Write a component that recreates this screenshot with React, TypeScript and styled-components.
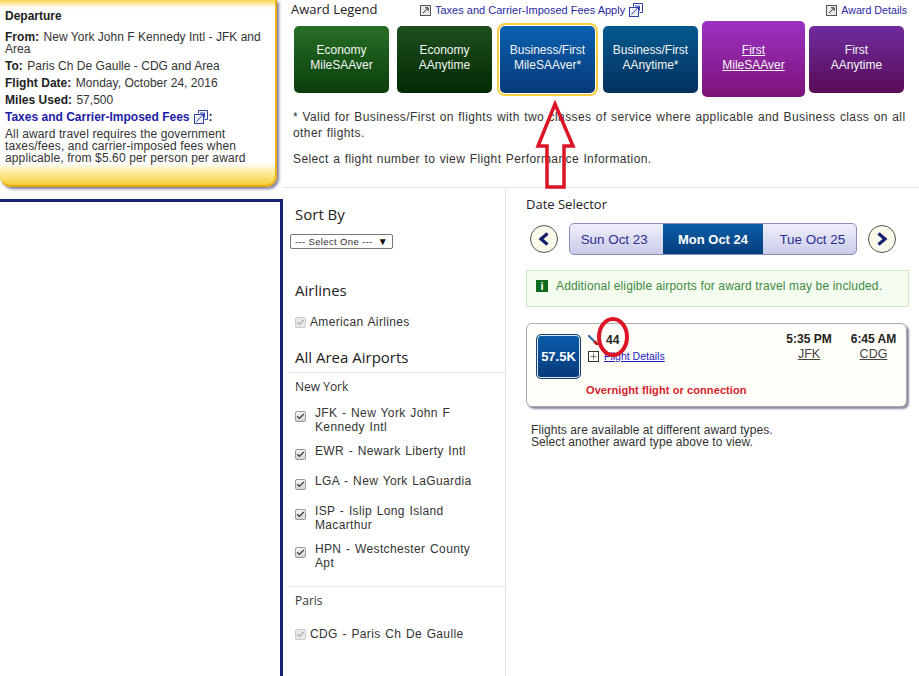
import React from 'react';
import styled, { createGlobalStyle } from 'styled-components';
import { Check, Plus } from 'lucide-react';

const GlobalStyle = createGlobalStyle`
    html, body {
        margin: 0;
        padding: 0;
        background: #fff;
    }
    body {
        font-family: "Liberation Sans", Arial, sans-serif;
        font-size: 12px;
        color: #222;
    }
`;

const Page = styled.div`
    position: relative;
    display: grid;
    grid-template-columns: 283px 1fr;
    width: 919px;
    height: 676px;
    overflow: hidden;
`;

const LeftColumn = styled.aside`
    display: flex;
    flex-direction: column;
    height: 676px;
`;

const SummaryCard = styled.section`
    box-sizing: border-box;
    width: 277px;
    height: 187px;
    padding: 9px 5px 0;
    border-right: 2px solid #eeb01a;
    border-bottom: 2px solid #e5a90f;
    border-radius: 0 0 11px 11px;
    background: linear-gradient(
        #fbd24a 0,
        #fffdf2 7px,
        #fff 12px,
        #fff 163px,
        #fdeda0 172px,
        #f8c92c 187px
    );
    box-shadow: 2px 2px 3px #77779a;
`;

const CardTitle = styled.div`
    font-weight: bold;
    line-height: 14px;
    margin-bottom: 8px;
`;

const SummaryRow = styled.div`
    line-height: 12px;
    margin-bottom: 5px;
    color: #333;
    letter-spacing: 0.03px;

    b {
        color: #222;
        margin-right: 1px;
    }
`;

const FeesLink = styled.div`
    display: flex;
    align-items: center;
    gap: 4px;
    height: 12px;
    font-weight: bold;
    line-height: 12px;
    color: #1c1ca8;
    margin-bottom: 5px;

    span {
        color: #222;
        margin-left: -3px;
    }
`;

const SummaryNote = styled.p`
    margin: 0;
    line-height: 12px;
    color: #333;
    letter-spacing: 0.12px;
`;

const NavBox = styled.div`
    flex: 1;
    margin-top: 12px;
    border-top: 3px solid #1a2274;
    border-right: 3px solid #1a2274;
`;

const Main = styled.main`
    display: flex;
    flex-direction: column;
`;

const LegendPanel = styled.section`
    box-sizing: border-box;
    height: 188px;
    padding: 0 8px;
    border-bottom: 1px solid #e8e8e8;
`;

const LegendHeader = styled.div`
    display: flex;
    align-items: center;
    height: 20px;
`;

const PanelTitle = styled.h2`
    margin: 0;
    font-family: "Open Sans", sans-serif;
    font-weight: 400;
    font-size: 13px;
    color: #222;
`;

const LegendTitle = styled(PanelTitle)`
    width: 129px;
    margin-top: -2px;
`;

const HeaderLink = styled.a<{ $push?: boolean }>`
    display: flex;
    align-items: center;
    gap: 4px;
    font-size: ${(p) => (p.$push ? '10.7px' : '11px')};
    color: #2a2aa0;
    margin-left: ${(p) => (p.$push ? 'auto' : '0')};
    margin-right: ${(p) => (p.$push ? '6px' : '0')};
`;

const AwardRow = styled.div`
    display: flex;
    align-items: center;
    height: 76px;
    margin-top: 1px;
    padding-left: 3px;
    gap: 8px;
`;

const AwardButton = styled.div<{ $from: string; $to: string; $wide?: boolean; $ring?: boolean }>`
    box-sizing: border-box;
    display: flex;
    align-items: center;
    justify-content: center;
    flex: none;
    width: ${(p) => (p.$wide ? '103px' : '95px')};
    height: ${(p) => (p.$wide ? '76px' : '67px')};
    margin: ${(p) => (p.$wide ? '0 -4px' : '0')};
    padding-bottom: 2px;
    border-radius: 5px;
    background: linear-gradient(${(p) => p.$from}, ${(p) => p.$to});
    color: #f2f6f4;
    font-size: 12px;
    line-height: 15px;
    text-align: center;
    box-shadow: ${(p) => (p.$ring ? '0 0 0 1px #fff, 0 0 0 3px #f7cf3e' : 'none')};
    text-decoration: ${(p) => (p.$wide ? 'underline' : 'none')};
`;

const LegendNote = styled.p<{ $top: number }>`
    margin: ${(p) => p.$top}px 0 0 2px;
    width: 620px;
    font-size: 12px;
    line-height: 16px;
    letter-spacing: 0.4px;
    word-spacing: 0.7px;
    color: #333;
`;

const Columns = styled.div`
    flex: 1;
    display: grid;
    grid-template-columns: 223px 1fr;
`;

const Filters = styled.section`
    box-sizing: border-box;
    border-right: 1px solid #e4e4e4;
    padding: 16px 0 0 6px;
`;

const FilterTitle = styled(PanelTitle)<{ $top?: number }>`
    font-size: 15px;
    line-height: 20px;
    padding-left: 6px;
    margin-top: ${(p) => p.$top ?? 0}px;
`;

const SortSelect = styled.div`
    box-sizing: border-box;
    display: flex;
    align-items: center;
    justify-content: space-between;
    width: 103px;
    height: 15px;
    margin: 10px 0 31px 1px;
    padding: 0 4px;
    border: 1px solid #777;
    border-radius: 2px;
    font-size: 9.5px;
    color: #333;
    letter-spacing: 0.35px;

    span {
        font-size: 10px;
        color: #111;
    }
`;

const AirportList = styled.div`
    display: flex;
    flex-direction: column;
`;

const CheckRow = styled.label<{ $muted?: boolean; $offset?: number }>`
    display: flex;
    align-items: ${(p) => (p.$muted ? 'center' : 'flex-start')};
    gap: ${(p) => (p.$muted ? '4px' : '9px')};
    padding-left: 6px;
    width: 184px;
    line-height: 14px;
    margin-top: ${(p) => p.$offset ?? 0}px;
    color: #333;
    font-size: 12px;
    letter-spacing: 0.35px;
    word-spacing: 1px;
    white-space: ${(p) => (p.$muted ? 'nowrap' : 'normal')};
`;

const CheckBox = styled.span<{ $muted?: boolean }>`
    box-sizing: border-box;
    flex: none;
    display: flex;
    align-items: center;
    justify-content: center;
    width: 11px;
    height: 11px;
    margin-top: ${(p) => (p.$muted ? '0' : '5px')};
    border: 1px solid ${(p) => (p.$muted ? '#ccc' : '#999')};
    border-radius: 2px;
    background: ${(p) => (p.$muted ? '#e8e8e8' : 'linear-gradient(#f4f4f4, #d4d4d4)')};
    color: ${(p) => (p.$muted ? '#aaa' : '#333')};
`;

const Divider = styled.div<{ $top: number }>`
    height: 1px;
    margin-top: ${(p) => p.$top}px;
    background: #e6e6e6;
`;

const RegionName = styled.div<{ $top: number }>`
    font-family: "Open Sans", sans-serif;
    font-size: 12px;
    line-height: 16px;
    padding-left: 6px;
    margin-top: ${(p) => p.$top}px;
    color: #333;
`;

const Results = styled.section`
    padding: 7px 0 0 20px;
`;

const DateRow = styled.div`
    display: flex;
    align-items: center;
    height: 32px;
    margin-top: 10px;
    gap: 11px;
    padding-left: 4px;
`;

const RoundButton = styled.div`
    box-sizing: border-box;
    display: flex;
    align-items: center;
    justify-content: center;
    width: 28px;
    height: 28px;
    border: 1px solid #555;
    border-radius: 50%;
    background: #fbf9ea;
    color: #14206e;
`;

const DateTabs = styled.div`
    display: flex;
    width: 288px;
    height: 32px;
    box-sizing: border-box;
    border: 1px solid #8a8fc0;
    border-radius: 5px;
    overflow: hidden;
    background: linear-gradient(#f0f0fa, #c9cbea);
`;

const DateTab = styled.div<{ $active?: boolean; $w: number; $nudge?: number }>`
    box-sizing: border-box;
    display: flex;
    align-items: center;
    justify-content: center;
    width: ${(p) => p.$w}px;
    padding-left: ${(p) => Math.max(p.$nudge ?? 0, 0)}px;
    padding-right: ${(p) => Math.max(-(p.$nudge ?? 0), 0)}px;
    font-size: ${(p) => (p.$active ? '13px' : '13.4px')};
    color: ${(p) => (p.$active ? '#fff' : '#2b2f8f')};
    font-weight: ${(p) => (p.$active ? 'bold' : 'normal')};
    background: ${(p) => (p.$active ? 'linear-gradient(#0a5fa8, #063d7c)' : 'transparent')};
`;

const InfoBox = styled.div`
    box-sizing: border-box;
    display: flex;
    align-items: flex-start;
    gap: 8px;
    width: 383px;
    height: 37px;
    margin-top: 15px;
    padding: 8px 9px;
    background: #f3fcef;
    border: 1px solid #d2e6c8;
    color: #3f8a42;
    font-size: 12px;
    line-height: 14px;
    letter-spacing: 0.15px;
`;

const InfoIcon = styled.span`
    flex: none;
    display: flex;
    align-items: center;
    justify-content: center;
    width: 12px;
    height: 12px;
    margin-top: 1px;
    background: #0f6b1c;
    color: #fff;
    font: bold 11px "Liberation Sans", sans-serif;
`;

const FlightCard = styled.article`
    box-sizing: border-box;
    display: flex;
    width: 381px;
    height: 84px;
    margin-top: 16px;
    padding: 10px 0 0 9px;
    border: 1px solid #aaa;
    border-radius: 6px;
    background: #fffef8;
    box-shadow: 2px 2px 2px #8a8aa0;
`;

const PriceBadge = styled.div`
    box-sizing: border-box;
    flex: none;
    display: flex;
    align-items: center;
    justify-content: center;
    width: 45px;
    height: 45px;
    border: 1px solid #17406f;
    box-shadow: inset 0 0 0 1px #dfe8f2;
    border-radius: 5px;
    background: linear-gradient(#0a5cab, #063a78);
    color: #fff;
    font-weight: bold;
    font-size: 13px;
`;

const FlightInfo = styled.div`
    flex: 1;
    padding-left: 7px;
`;

const FlightNumber = styled.div`
    display: flex;
    align-items: center;
    gap: 8px;
    height: 14px;
    margin-top: -1px;
    font-weight: bold;
    font-size: 12px;
    color: #222;
`;

const DetailRow = styled.div`
    display: flex;
    align-items: center;
    gap: 5px;
    margin-top: 2px;
    height: 14px;
    color: #1c1cc0;
    font-size: 10.5px;
    text-decoration: underline;
`;

const PlusBox = styled.span`
    box-sizing: border-box;
    display: flex;
    align-items: center;
    justify-content: center;
    width: 11px;
    height: 11px;
    border: 1px solid #333;
    color: #222;
`;

const Overnight = styled.div`
    margin: 21px 0 0 -2px;
    font-weight: bold;
    font-size: 11px;
    letter-spacing: 0.1px;
    color: #d3222c;
`;

const TimeColumn = styled.div<{ $w: number }>`
    width: ${(p) => p.$w}px;
    text-align: center;
    margin-top: -2px;
    font-size: 12px;
    line-height: 15px;
    color: #222;

    b {
        display: block;
    }
    u {
        color: #444;
        font-size: 12.5px;
    }
`;

const ResultNote = styled.p`
    margin: 17px 0 0 5px;
    line-height: 12px;
    font-size: 12px;
    letter-spacing: 0.08px;
    color: #333;
`;

const Annotation = styled.svg`
    position: absolute;
    left: 0;
    top: 0;
    pointer-events: none;
`;

function FramedIcon() {
    return (
        <svg width="11" height="12" viewBox="0 0 11 12" fill="none">
            <rect x="0.5" y="1.5" width="10" height="10" fill="#e6e9ee" stroke="#555" />
            <path d="M3 9 L8 4 M5 3.8 H8.2 V7" stroke="#333" />
        </svg>
    );
}

function OverlapIcon() {
    return (
        <svg width="14" height="14" viewBox="0 0 14 14" fill="none" stroke="#2f3fa8">
            <path d="M4.5 3.5 V0.5 H13.5 V9.5 H10.5" />
            <rect x="0.5" y="4.5" width="9" height="9" fill="#eef1fb" />
            <path d="M2.5 11.5 L10 3.5 M6 3 H10.5 V7.5" />
        </svg>
    );
}

function Arrow({ flip }: { flip?: boolean }) {
    return (
        <svg width="12" height="14" viewBox="0 0 12 14" fill="none" stroke="currentColor" strokeWidth="3.2">
            <path d={flip ? 'M2.5 1.5 L9 7 L2.5 12.5' : 'M9.5 1.5 L3 7 L9.5 12.5'} />
        </svg>
    );
}

const airports = [
    { label: 'JFK - New York John F Kennedy Intl', top: 11 },
    { label: 'EWR - Newark Liberty Intl', top: 10 },
    { label: 'LGA - New York LaGuardia', top: 14 },
    { label: 'ISP - Islip Long Island Macarthur', top: 14 },
    { label: 'HPN - Westchester County Apt', top: 10 },
];

const awards = [
    { text: ['Economy', 'MileSAAver'], from: '#276f27', to: '#0b3d0b' },
    { text: ['Economy', 'AAnytime'], from: '#1e4f1e', to: '#022a02' },
    { text: ['Business/First', 'MileSAAver*'], from: '#0a60b0', to: '#063a78', ring: true },
    { text: ['Business/First', 'AAnytime*'], from: '#05598f', to: '#03305e' },
    { text: ['First', 'MileSAAver'], from: '#9c32c4', to: '#7c1277', wide: true },
    { text: ['First', 'AAnytime'], from: '#6f2c9e', to: '#5a0c58' },
];

export default function App() {
    return (
        <Page>
            <GlobalStyle />
            <LeftColumn>
                <SummaryCard>
                    <CardTitle>Departure</CardTitle>
                    <SummaryRow><b>From:</b> New York John F Kennedy Intl - JFK and Area</SummaryRow>
                    <SummaryRow><b>To:</b> Paris Ch De Gaulle - CDG and Area</SummaryRow>
                    <SummaryRow><b>Flight Date:</b> Monday, October 24, 2016</SummaryRow>
                    <SummaryRow><b>Miles Used:</b> 57,500</SummaryRow>
                    <FeesLink>Taxes and Carrier-Imposed Fees <OverlapIcon /><span>:</span></FeesLink>
                    <SummaryNote>
                        All award travel requires the government taxes/fees, and carrier-imposed fees when
                        applicable, from $5.60 per person per award
                    </SummaryNote>
                </SummaryCard>
                <NavBox />
            </LeftColumn>
            <Main>
                <LegendPanel>
                    <LegendHeader>
                        <LegendTitle>Award Legend</LegendTitle>
                        <HeaderLink>
                            <FramedIcon /> Taxes and Carrier-Imposed Fees Apply <OverlapIcon />
                        </HeaderLink>
                        <HeaderLink $push>
                            <FramedIcon /> Award Details
                        </HeaderLink>
                    </LegendHeader>
                    <AwardRow>
                        {awards.map((a) => (
                            <AwardButton key={a.text.join()} $from={a.from} $to={a.to} $wide={a.wide} $ring={a.ring}>
                                <span>{a.text[0]}<br />{a.text[1]}</span>
                            </AwardButton>
                        ))}
                    </AwardRow>
                    <LegendNote $top={12}>
                        * Valid for Business/First on flights with two classes of service where applicable and
                        Business class on all other flights.
                    </LegendNote>
                    <LegendNote $top={10}>Select a flight number to view Flight Performance Information.</LegendNote>
                </LegendPanel>
                <Columns>
                    <Filters>
                        <FilterTitle>Sort By</FilterTitle>
                        <SortSelect>--- Select One --- <span>▼</span></SortSelect>
                        <FilterTitle>Airlines</FilterTitle>
                        <CheckRow $muted $offset={15}>
                            <CheckBox $muted><Check size={9} strokeWidth={3} /></CheckBox> American Airlines
                        </CheckRow>
                        <FilterTitle $top={18}>All Area Airports</FilterTitle>
                        <Divider $top={5} />
                        <RegionName $top={6}>New York</RegionName>
                        <AirportList>
                            {airports.map((a) => (
                                <CheckRow key={a.label} $offset={a.top}>
                                    <CheckBox><Check size={9} strokeWidth={3} /></CheckBox>
                                    <span>{a.label}</span>
                                </CheckRow>
                            ))}
                        </AirportList>
                        <Divider $top={16} />
                        <RegionName $top={6}>Paris</RegionName>
                        <CheckRow $muted $offset={18}>
                            <CheckBox $muted><Check size={9} strokeWidth={3} /></CheckBox> CDG - Paris Ch De Gaulle
                        </CheckRow>
                    </Filters>
                    <Results>
                        <PanelTitle>Date Selector</PanelTitle>
                        <DateRow>
                            <RoundButton><Arrow /></RoundButton>
                            <DateTabs>
                                <DateTab $w={94} $nudge={-5}>Sun Oct 23</DateTab>
                                <DateTab $w={100} $active>Mon Oct 24</DateTab>
                                <DateTab $w={94} $nudge={6}>Tue Oct 25</DateTab>
                            </DateTabs>
                            <RoundButton><Arrow flip /></RoundButton>
                        </DateRow>
                        <InfoBox>
                            <InfoIcon>i</InfoIcon>
                            Additional eligible airports for award travel may be included.
                        </InfoBox>
                        <FlightCard>
                            <PriceBadge>57.5K</PriceBadge>
                            <FlightInfo>
                                <FlightNumber>
                                    <svg width="10" height="10" viewBox="0 0 10 10">
                                        <path d="M0 0 L6 6" stroke="#2a6aa8" strokeWidth="2" />
                                        <path d="M6 6 L10 10" stroke="#b52020" strokeWidth="3" />
                                    </svg>
                                    44
                                </FlightNumber>
                                <DetailRow>
                                    <PlusBox><Plus size={9} strokeWidth={1.5} /></PlusBox>
                                    Flight Details
                                </DetailRow>
                                <Overnight>Overnight flight or connection</Overnight>
                            </FlightInfo>
                            <TimeColumn $w={64}><b>5:35 PM</b><u>JFK</u></TimeColumn>
                            <TimeColumn $w={65}><b>6:45 AM</b><u>CDG</u></TimeColumn>
                        </FlightCard>
                        <ResultNote>
                            Flights are available at different award types.<br />
                            Select another award type above to view.
                        </ResultNote>
                    </Results>
                </Columns>
            </Main>
            <Annotation width="919" height="676" fill="none" stroke="#dc1426">
                <path d="M555 104 L573 146 L564 146 L564 187 L547 187 L547 146 L538 146 Z" strokeWidth="3.5" />
                <ellipse cx="613" cy="337" rx="14" ry="18" strokeWidth="4" />
            </Annotation>
        </Page>
    );
}
